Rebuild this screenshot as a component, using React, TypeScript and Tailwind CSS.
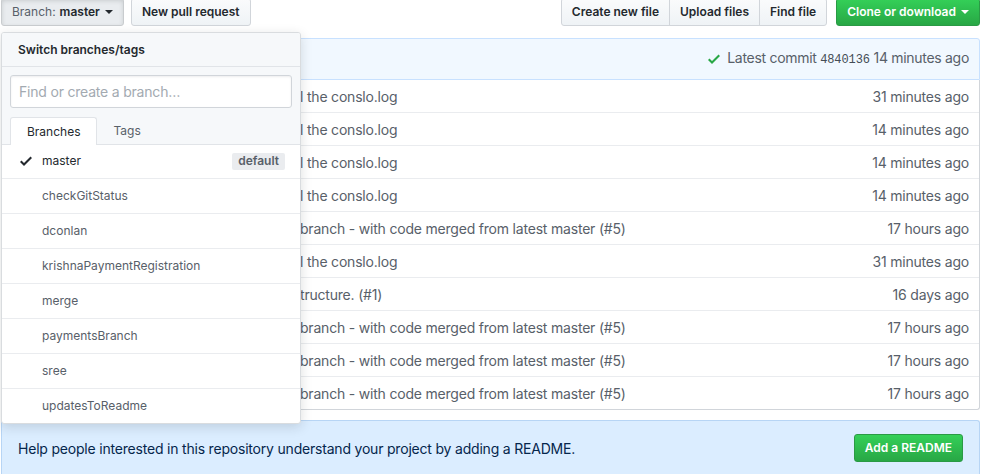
import React from "react";

const Check = ({ className }: { className?: string }) => (
  <svg viewBox="0 0 12 16" width="12" height="16" className={className} fill="currentColor" aria-hidden="true">
    <path fillRule="evenodd" d="M12 5l-8 8-4-4 1.5-1.5L4 10l6.5-6.5L12 5z" />
  </svg>
);

type Row = { msg: string; time: string };

const rows: Row[] = [
  { msg: "l the conslo.log", time: "31 minutes ago" },
  { msg: "l the conslo.log", time: "14 minutes ago" },
  { msg: "l the conslo.log", time: "14 minutes ago" },
  { msg: "l the conslo.log", time: "14 minutes ago" },
  { msg: "branch - with code merged from latest master (#5)", time: "17 hours ago" },
  { msg: "l the conslo.log", time: "31 minutes ago" },
  { msg: "tructure. (#1)", time: "16 days ago" },
  { msg: "branch - with code merged from latest master (#5)", time: "17 hours ago" },
  { msg: "branch - with code merged from latest master (#5)", time: "17 hours ago" },
  { msg: "branch - with code merged from latest master (#5)", time: "17 hours ago" },
];

const branches = [
  "checkGitStatus",
  "dconlan",
  "krishnaPaymentRegistration",
  "merge",
  "paymentsBranch",
  "sree",
  "updatesToReadme",
];

function Dropdown() {
  return (
    <div className="absolute left-0 top-[34px] z-10 w-[300px] rounded-[3px] border border-[#d9dcdf] bg-white shadow-[0_3px_12px_rgba(27,31,35,0.15)] overflow-hidden">
      <div className="h-[34px] border-b border-[#e1e4e8] bg-[#f6f8fa] px-[16px] flex items-center text-[12px] font-semibold text-[#24292e]">
        Switch branches/tags
      </div>
      <div className="bg-[#f6f8fa] pt-[8px] border-b border-[#e1e4e8]">
        <div className="px-[8px]">
          <div className="h-[33px] rounded-[3px] border border-[#d1d5da] bg-white px-[8px] flex items-center text-[14px] tracking-[-0.2px] text-[#a3aab1] shadow-[inset_0_1px_2px_rgba(27,31,35,0.075)]">
            Find or create a branch…
          </div>
        </div>
        <div className="mt-[9px] px-[8px] flex h-[27px] items-end">
          <div className="-mb-px h-[28px] rounded-t-[3px] border border-b-0 border-[#e1e4e8] bg-white px-[16px] flex items-center text-[12px] text-[#24292e]">
            Branches
          </div>
          <div className="-mb-px h-[28px] px-[16px] flex items-center text-[12px] text-[#586069]">
            Tags
          </div>
        </div>
      </div>
      <div className="h-[34px] border-b border-[#eaecef] pl-[18px] pr-[15px] pb-[1px] flex items-center text-[12px] text-[#24292e]">
        <Check className="text-[#24292e]" />
        <span className="ml-[10px]">master</span>
        <span className="ml-auto h-[17px] rounded-[2px] bg-[#eaecef] px-[6px] flex items-center text-[12px] font-semibold text-[#586069]">
          default
        </span>
      </div>
      {branches.map((b, i) => (
        <div
          key={b}
          className={
            i === branches.length - 1
              ? "h-[34px] pl-[18px] flex items-center text-[12px] text-[#586069]"
              : "h-[35px] border-b border-[#eaecef] pl-[18px] flex items-center text-[12px] text-[#586069]"
          }
        >
          <span className="w-[12px]" />
          <span className="ml-[10px]">{b}</span>
        </div>
      ))}
    </div>
  );
}

export default function App() {
  return (
    <div className="h-[474px] w-[981px] overflow-hidden bg-white font-['Inter','Liberation_Sans',sans-serif] text-[#24292e]">
      <div className="pl-[1px] pr-[1px]">
        {/* top buttons */}
        <div className="-mt-[2px] flex items-center">
          <div className="relative">
            <div className="h-[28px] rounded-[3px] border border-[#c9cccf] bg-[#e9ecef] px-[10px] flex items-center text-[12px] shadow-[inset_0_2px_4px_rgba(27,31,35,0.15)]">
              <span className="text-[#586069]">Branch:</span>
              <span className="ml-[4px] font-semibold text-[#24292e]">master</span>
              <span className="ml-[5px] inline-block h-0 w-0 border-x-[4px] border-t-[4px] border-x-transparent border-t-[#24292e]" />
            </div>
            <Dropdown />
          </div>
          <div className="ml-[7px] h-[28px] rounded-[3px] border border-[#d1d5da] bg-gradient-to-b from-[#fafbfc] to-[#eff3f6] px-[10px] flex items-center text-[12px] font-semibold text-[#24292e]">
            New pull request
          </div>
          <div className="ml-auto flex">
            <div className="h-[28px] rounded-l-[3px] border border-[#d1d5da] bg-gradient-to-b from-[#fafbfc] to-[#eff3f6] px-[10px] flex items-center text-[12px] font-semibold">
              Create new file
            </div>
            <div className="-ml-px h-[28px] border border-[#d1d5da] bg-gradient-to-b from-[#fafbfc] to-[#eff3f6] px-[10px] flex items-center text-[12px] font-semibold">
              Upload files
            </div>
            <div className="-ml-px h-[28px] rounded-r-[3px] border border-[#d1d5da] bg-gradient-to-b from-[#fafbfc] to-[#eff3f6] px-[10px] flex items-center text-[12px] font-semibold">
              Find file
            </div>
            <div className="ml-[9px] h-[28px] rounded-[3px] border border-[#2a9a45] bg-gradient-to-b from-[#34d058] to-[#28a745] px-[10px] flex items-center text-[12px] font-semibold text-white">
              Clone or download
              <span className="ml-[5px] inline-block h-0 w-0 border-x-[4px] border-t-[4px] border-x-transparent border-t-white" />
            </div>
          </div>
        </div>

        {/* commit header + files */}
        <div className="mt-[12px]">
          <div className="h-[42px] rounded-t-[3px] border border-[#c8e1ff] bg-[#f1f8ff] pr-[10px] flex items-center justify-end text-[14px] tracking-[-0.3px] text-[#586069]">
            <Check className="text-[#28a745]" />
            <span className="ml-[7px] leading-[20px]">
              Latest commit{" "}
              <span className="font-['Liberation_Mono',monospace] text-[12px] tracking-[-0.1px] text-[#444d56]">4840136</span>{" "}
              14 minutes ago
            </span>
          </div>
          <div className="rounded-b-[3px] border border-t-0 border-[#d1d5da]">
            {rows.map((r, i) => (
              <div
                key={i}
                className={
                  i === rows.length - 1
                    ? "h-[32px] flex items-center text-[14px] tracking-[-0.2px] text-[#586069]"
                    : "h-[33px] border-b border-[#eaecef] flex items-center text-[14px] tracking-[-0.2px] text-[#586069]"
                }
              >
                <div className="w-[298px] shrink-0" />
                <span className="whitespace-nowrap">{r.msg}</span>
                <span className="ml-auto pr-[10px] whitespace-nowrap">{r.time}</span>
              </div>
            ))}
          </div>
        </div>

        {/* readme banner */}
        <div className="mt-[10px] rounded-t-[3px] border border-b-0 border-[#b7d5f5] bg-[#dbedff] px-[16px] pt-[13px] pb-[14px] flex items-center justify-between">
          <span className="text-[14px] tracking-[-0.2px] text-[#05264c]">
            Help people interested in this repository understand your project by adding a README.
          </span>
          <div className="h-[28px] rounded-[3px] border border-[#2a9a45] bg-gradient-to-b from-[#34d058] to-[#28a745] px-[10px] flex items-center text-[12px] font-semibold text-white">
            Add a README
          </div>
        </div>
      </div>
    </div>
  );
}
